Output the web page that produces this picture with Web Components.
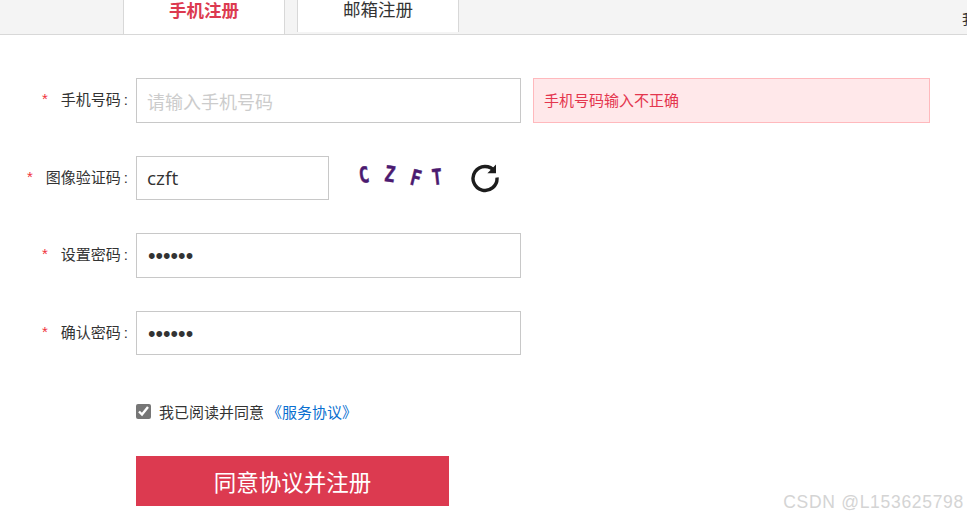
<!DOCTYPE html>
<html lang="zh">
<head>
<meta charset="utf-8">
<title>注册</title>
<style>
  html, body { margin: 0; height: 100%; background: #fff; overflow: hidden; }
  body { font-family: "Liberation Sans", "Noto Sans CJK SC", sans-serif; color: #333; }
</style>
</head>
<body>
<reg-page>
  <reg-tabs>
    <reg-tab active>手机注册</reg-tab>
    <reg-tab>邮箱注册</reg-tab>
    <span slot="side">我</span>
  </reg-tabs>
  <reg-row label="手机号码:" placeholder="请输入手机号码" error="手机号码输入不正确"></reg-row>
  <reg-row label="图像验证码:" value="czft" short>
    <reg-captcha></reg-captcha>
  </reg-row>
  <reg-row label="设置密码:" value="123456" type="password"></reg-row>
  <reg-row label="确认密码:" value="123456" type="password"></reg-row>
  <reg-agree></reg-agree>
  <reg-submit>同意协议并注册</reg-submit>
</reg-page>
<reg-mark>CSDN @L153625798</reg-mark>

<script>
  class RegPage extends HTMLElement {
    constructor() {
      super();
      this.attachShadow({ mode: 'open' });
      this.shadowRoot.innerHTML = `
        <style>
          :host { display: block; }
          .form { display: flex; flex-direction: column; padding-top: 43px; }
        </style>
        <slot name="top"></slot>
        <div class="form"><slot></slot></div>
      `;
    }
    connectedCallback() {
      const tabs = this.querySelector('reg-tabs');
      if (tabs) tabs.slot = 'top';
    }
  }

  class RegTabs extends HTMLElement {
    constructor() {
      super();
      this.attachShadow({ mode: 'open' });
      this.shadowRoot.innerHTML = `
        <style>
          :host {
            display: flex;
            height: 34px;
            background: #f4f4f4;
            border-bottom: 1px solid #d8d8d8;
            padding-left: 123px;
            gap: 12px;
            overflow: hidden;
            align-items: flex-start;
          }
          .side {
            margin-left: auto;
            margin-right: -9px;
            padding-top: 10px;
            font-size: 14px;
            line-height: 18px;
            color: #333;
          }
        </style>
        <slot></slot>
        <div class="side"><slot name="side"></slot></div>
      `;
    }
  }

  class RegTab extends HTMLElement {
    constructor() {
      super();
      this.attachShadow({ mode: 'open' });
      this.shadowRoot.innerHTML = `
        <style>
          :host {
            display: block;
            box-sizing: border-box;
            width: 162px;
            height: 32px;
            background: #fff;
            border: 1px solid #d8d8d8;
            border-width: 0 1px;
            text-align: center;
            font-size: 17.5px;
            line-height: 20px;
            color: #333;
          }
          :host([active]) {
            height: 35px;
            color: #dc3a50;
            font-weight: bold;
            line-height: 23px;
          }
        </style>
        <slot></slot>
      `;
    }
  }

  class RegRow extends HTMLElement {
    constructor() {
      super();
      this.attachShadow({ mode: 'open' });
    }
    connectedCallback() {
      const label = (this.getAttribute('label') || '').replace(':', '');
      const type = this.getAttribute('type') || 'text';
      const value = this.getAttribute('value') || '';
      const placeholder = this.getAttribute('placeholder') || '';
      const error = this.getAttribute('error');
      this.shadowRoot.innerHTML = `
        <style>
          :host {
            display: flex;
            align-items: center;
            height: 44.6px;
            margin-bottom: 33px;
          }
          .label {
            box-sizing: border-box;
            width: 128px;
            margin-right: 8px;
            padding-bottom: 3px;
            display: flex;
            justify-content: flex-end;
            align-items: center;
            gap: 13px;
            font-size: 15px;
            color: #333;
            white-space: nowrap;
          }
          .colon { padding-left: 3px; }
          .star { color: #f0323c; font-size: 15px; }
          input {
            box-sizing: border-box;
            width: 385px;
            height: 100%;
            padding: 3px 10px 0;
            border: 1px solid #c8c8c8;
            border-radius: 0;
            outline: none;
            font: 19px "Open Sans", "Noto Sans CJK SC", sans-serif;
            color: #333;
            background: #fff;
          }
          input[value=""] { font-size: 18px; padding-top: 4px; }
          input[type="password"] { font: 21.5px "Liberation Sans", sans-serif; padding: 2px 11px 0; }
          input::placeholder { color: #ccc; opacity: 1; }
          :host([short]) input { width: 193px; padding-top: 1px; }
          .error {
            box-sizing: border-box;
            width: 397px;
            height: 100%;
            margin-left: 12px;
            padding: 0 0 1px 10px;
            display: flex;
            align-items: center;
            background: #ffe8ea;
            border: 1px solid #ffb9bd;
            color: #e4364e;
            font-size: 15px;
          }
        </style>
        <div class="label"><span class="star">*</span><span>${label}<span class="colon">:</span></span></div>
        <input type="${type}" value="${value}" placeholder="${placeholder}">
        ${error ? `<div class="error">${error}</div>` : ''}
        <slot></slot>
      `;
    }
  }

  class RegCaptcha extends HTMLElement {
    constructor() {
      super();
      this.attachShadow({ mode: 'open' });
      this.shadowRoot.innerHTML = `
        <style>
          :host { display: flex; align-items: center; margin-left: 29px; }
          .code {
            display: flex;
            width: 84px;
            justify-content: space-between;
            font: bold 20px/1 "DejaVu Sans Mono", monospace;
            -webkit-text-stroke: .4px #4b1a70;
            color: #4b1a70;
          }
          .code span { display: block; width: 11px; text-align: center; }
          .code span:nth-child(1) { transform: translateY(-3px) rotate(-8deg) scale(.85, 1.1); }
          .code span:nth-child(2) { transform: translateY(-4px) rotate(8deg) scale(.85, 1.1); margin-left: 5px; }
          .code span:nth-child(3) { transform: translateY(0) rotate(14deg) scale(.85, 1.1); margin-left: 5px; }
          .code span:nth-child(4) { transform: translateY(-1px) rotate(-6deg) scale(.85, 1.1); }
          svg { display: block; margin-left: 27px; margin-top: -2px; }
        </style>
        <div class="code"><span>C</span><span>Z</span><span>F</span><span>T</span></div>
        <svg width="32" height="32" viewBox="0 0 32 32" fill="none" stroke="#1d1d1d" stroke-width="3.4">
          <path d="M25.6 10.2A12 12 0 1 0 28 16.5"/>
          <path d="M27 3.6v8.6h-8.6z" fill="#1d1d1d" stroke="none"/>
        </svg>
      `;
    }
  }

  class RegAgree extends HTMLElement {
    constructor() {
      super();
      this.attachShadow({ mode: 'open' });
      this.shadowRoot.innerHTML = `
        <style>
          :host {
            display: flex;
            align-items: center;
            margin: 13.6px 0 34px 136px;
            height: 20px;
            font-size: 15px;
            color: #333;
          }
          input {
            width: 15px;
            height: 15px;
            margin: 0 8px 0 0;
            accent-color: #767676;
          }
          span, a { position: relative; top: 0; }
          a { color: #0a6fd0; text-decoration: none; margin-left: 3px; }
        </style>
        <input type="checkbox" checked>
        <span>我已阅读并同意</span><a href="#">《服务协议》</a>
      `;
    }
  }

  class RegSubmit extends HTMLElement {
    constructor() {
      super();
      this.attachShadow({ mode: 'open' });
      this.shadowRoot.innerHTML = `
        <style>
          :host { display: block; margin-left: 136px; }
          button {
            display: block;
            width: 313px;
            height: 50px;
            border: 0;
            padding: 0;
            background: #dc3a50;
            color: #fff;
            font: 22.5px "Liberation Sans", "Noto Sans CJK SC", sans-serif;
          }
        </style>
        <button type="button"><slot></slot></button>
      `;
    }
  }

  class RegMark extends HTMLElement {
    constructor() {
      super();
      this.attachShadow({ mode: 'open' });
      this.shadowRoot.innerHTML = `
        <style>
          :host {
            position: absolute;
            right: 3px;
            top: 491px;
            font: 17.5px/22px "Liberation Sans", sans-serif;
            letter-spacing: 0.7px;
            color: #d4d4d4;
            white-space: nowrap;
          }
        </style>
        <slot></slot>
      `;
    }
  }

  customElements.define('reg-page', RegPage);
  customElements.define('reg-tabs', RegTabs);
  customElements.define('reg-tab', RegTab);
  customElements.define('reg-row', RegRow);
  customElements.define('reg-captcha', RegCaptcha);
  customElements.define('reg-agree', RegAgree);
  customElements.define('reg-submit', RegSubmit);
  customElements.define('reg-mark', RegMark);
</script>
</body>
</html>
